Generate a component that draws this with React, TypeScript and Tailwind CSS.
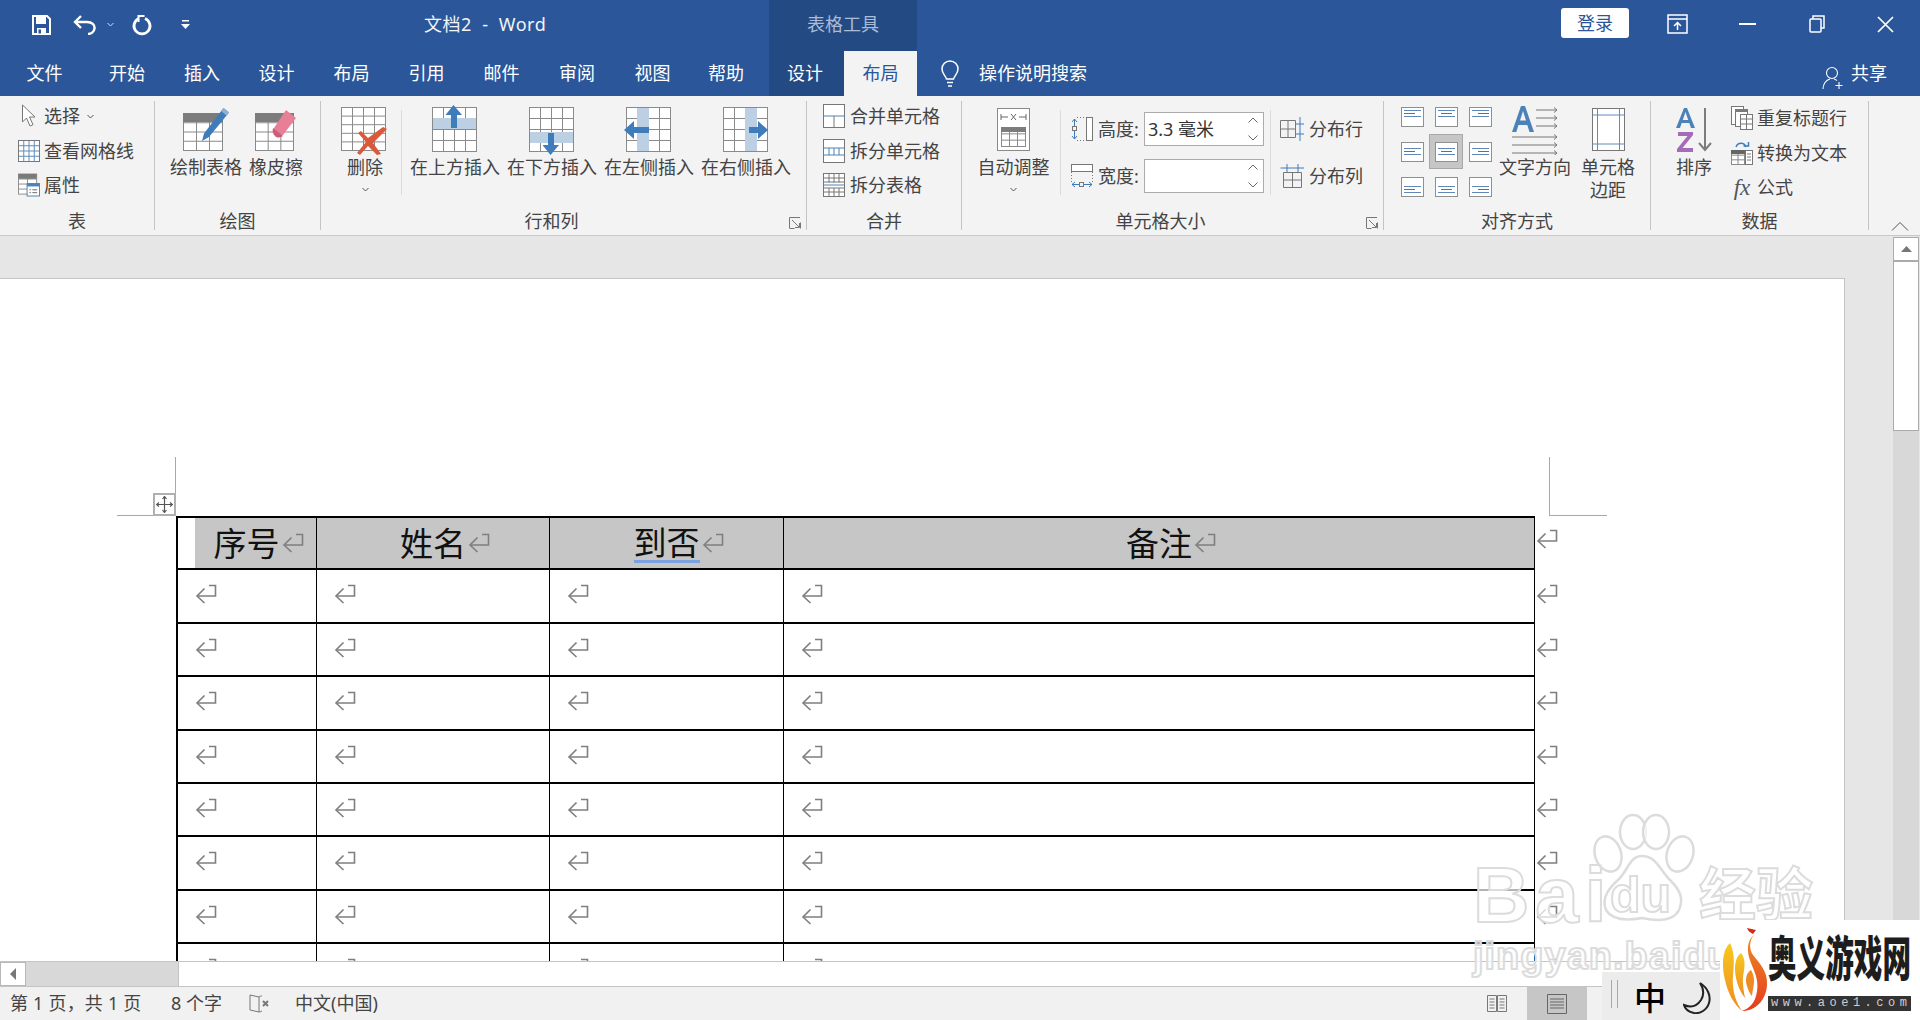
import type { ReactNode } from "react";

const BLUE = "#2b579a";
const ARROW = "#3f7cba";
const BAND = "#bccfe3";
const LINE = "#8a8a8a";

function Grid({ x, y, w, h, cols, rows, stroke = LINE }: { x: number; y: number; w: number; h: number; cols: number; rows: number; stroke?: string }) {
  const items = [];
  for (let i = 1; i < cols; i++) {
    const px = x + (w * i) / cols;
    items.push(<line key={`c${i}`} x1={px} y1={y} x2={px} y2={y + h} stroke={stroke} strokeWidth="1" />);
  }
  for (let i = 1; i < rows; i++) {
    const py = y + (h * i) / rows;
    items.push(<line key={`r${i}`} x1={x} y1={py} x2={x + w} y2={py} stroke={stroke} strokeWidth="1" />);
  }
  return (
    <g>
      <rect x={x} y={y} width={w} height={h} fill="#fff" stroke={stroke} strokeWidth="1" />
      {items}
    </g>
  );
}

function ReturnMark({ className = "" }: { className?: string }) {
  return (
    <svg width="22" height="20" viewBox="0 0 22 20" fill="none" stroke="#7f7f7f" strokeWidth="1.6" className={`shrink-0 ${className}`}>
      <path d="M14 1.5h6.5v10.5H2" />
      <path d="M9.5 4.5 2 12l7.500 7" />
    </svg>
  );
}

function Chevron({ className = "", color = "#555" }: { className?: string; color?: string }) {
  return (
    <svg width="7" height="5" viewBox="0 0 7 5" fill="none" stroke={color} strokeWidth="1" className={className}>
      <path d="M.5 1 3.500 4l3-3" />
    </svg>
  );
}

function Launcher() {
  return (
    <svg width="12" height="12" viewBox="0 0 12 12" fill="none" stroke="#777" strokeWidth="1">
      <path d="M.5 11V.5H11M.5 11.500h5M11.500 5.500v6M3 3l7 7M6 10.500h4.500V6" />
    </svg>
  );
}

function InsertIcon({ dir }: { dir: "up" | "down" | "left" | "right" }) {
  return (
    <svg width="50" height="50" viewBox="0 0 50 50">
      <Grid x={2.500} y={2.500} w={44} h={44} cols={4} rows={4} />
      {dir === "up" && <rect x="3" y="13" width="43" height="11" fill={BAND} />}
      {dir === "down" && <rect x="3" y="27" width="43" height="11" fill={BAND} />}
      {dir === "left" && <rect x="13" y="3" width="12" height="43" fill={BAND} />}
      {dir === "right" && <rect x="24" y="3" width="12" height="43" fill={BAND} />}
      {dir === "up" && <path d="M23.500 0 32 10h-5v13h-6V10h-5.500z" fill={ARROW} />}
      {dir === "down" && <path d="M23.500 50 32 40h-5V28h-6v12h-5.500z" fill={ARROW} />}
      {dir === "left" && <path d="M0 25l10-9v6h15v6H10v6z" fill={ARROW} />}
      {dir === "right" && <path d="M47 25l-10-9v6H28v6h9v6z" fill={ARROW} />}
    </svg>
  );
}

function LargeBtn({ label, second, icon, width, chevron, className = "" }: { label: string; second?: string; icon: ReactNode; width: number; chevron?: boolean; className?: string }) {
  return (
    <div className={`flex flex-col items-center pt-[9px] shrink-0 ${className}`} style={{ width }}>
      <div className="h-[50px] flex items-center justify-center">{icon}</div>
      <div className="leading-[24px] whitespace-nowrap">{label}</div>
      {second && <div className="leading-[22px] whitespace-nowrap">{second}</div>}
      {chevron && (
        <div className="h-[20px] flex items-center">
          <Chevron />
        </div>
      )}
    </div>
  );
}

function SmallRow({ icon, label, iconWidth = 22, gap = 4, after }: { icon: ReactNode; label: string; iconWidth?: number; gap?: number; after?: ReactNode }) {
  return (
    <div className="flex items-center whitespace-nowrap h-[34.5px]">
      <div className="flex items-center justify-center shrink-0" style={{ width: iconWidth, marginRight: gap }}>
        {icon}
      </div>
      {label}
      {after}
    </div>
  );
}

function Group({ width, label, launcher, children, bodyClass = "" }: { width: number; label?: string; launcher?: boolean; children: ReactNode; bodyClass?: string }) {
  return (
    <div className="flex flex-col shrink-0 h-full" style={{ width }}>
      <div className={`h-[112px] flex ${bodyClass}`}>{children}</div>
      <div className="h-[27px] mt-px flex items-center">
        <div className="flex-1 text-center leading-[27px]">{label}</div>
        {launcher && (
          <div className="w-[24px] flex justify-center pt-[3px] pl-[2px]">
            <Launcher />
          </div>
        )}
      </div>
    </div>
  );
}

function GroupSep() {
  return <div className="w-px h-[129px] mt-[5px] bg-[#c4c4c4] shrink-0" />;
}

function InnerSep({ className = "" }: { className?: string }) {
  return <div className={`w-px h-[85px] mt-[14px] bg-[#dcdcdc] shrink-0 ${className}`} />;
}

function AlignCell({ h, v, active }: { h: "l" | "c" | "r"; v: "t" | "m" | "b"; active?: boolean }) {
  const y0 = v === "t" ? 3.500 : v === "m" ? 6.500 : 9.500;
  const widths = [17, 11, 17];
  return (
    <div className={`w-[34px] h-[35px] flex items-center justify-center ${active ? "bg-[#c6c6c6] border border-[#a8a8a8]" : ""}`}>
      <svg width="23" height="20" viewBox="0 0 23 20">
        <rect x=".5" y=".5" width="22" height="19" fill="#fff" stroke="#8f8f8f" />
        {widths.map((w, i) => {
          const x = h === "l" ? 3 : h === "c" ? (23 - w) / 2 : 20 - w;
          const lineColor = i === 1 ? "#6d6d6d" : "#5f88b8";
          return <line key={i} x1={x} x2={x + w} y1={y0 + i * 3} y2={y0 + i * 3} stroke={lineColor} />;
        })}
      </svg>
    </div>
  );
}

function Spinner() {
  return (
    <div className="flex flex-col gap-[12px]">
      <svg width="10" height="6" viewBox="0 0 10 6" fill="none" stroke="#666">
        <path d="M.5 5.500 5 1l4.500 4.500" />
      </svg>
      <svg width="10" height="6" viewBox="0 0 10 6" fill="none" stroke="#666">
        <path d="M.5.5 5 5 9.500.5" />
      </svg>
    </div>
  );
}

function Ribbon() {
  return (
    <div className="h-[140px] bg-[#f3f3f3] border-b border-[#c8c8c8] flex text-[18px] leading-none text-[#444] shrink-0">
      <Group width={154} label="表" bodyClass="flex-col pl-[18px] pt-[3px]">
        <SmallRow
          label="选择"
          icon={
            <svg width="16" height="24" viewBox="0 0 16 24" fill="#fff" stroke="#777">
              <path d="M1.500 1v17l4-4 3.500 8 3-1.300-3.500-7.700h5.500z" />
            </svg>
          }
          after={<Chevron className="ml-[7px]" />}
        />
        <SmallRow
          label="查看网格线"
          icon={
            <svg width="22" height="24" viewBox="0 0 22 24">
              <Grid x={.5} y={1.500} w={21} h={21} cols={4} rows={4} stroke="#5e8cbc" />
              <rect x=".5" y="1.500" width="21" height="21" fill="none" stroke="#777" />
            </svg>
          }
        />
        <SmallRow
          label="属性"
          icon={
            <svg width="23" height="24" viewBox="0 0 23 24">
              <Grid x={.5} y={.5} w={19} h={21} cols={2} rows={4} stroke="#8c8c8c" />
              <rect x=".5" y=".5" width="19" height="5" fill="#7a7a7a" />
              <rect x="9.500" y="10.500" width="13" height="13" fill="#fff" stroke="#4d82b8" />
              <rect x="9.500" y="10.500" width="13" height="3" fill="#4d82b8" />
              <path d="M12 17h1.500M15 17h5M12 20h1.500M15 20h5" stroke="#666" />
            </svg>
          }
        />
      </Group>
      <GroupSep />
      <Group width={165} label="绘图" bodyClass="pl-[15px]">
        <LargeBtn
          width={72}
          label="绘制表格"
          icon={
            <svg width="48" height="46" viewBox="0 0 48 46">
              <Grid x={1.500} y={6.500} w={39} h={37} cols={3} rows={4} />
              <rect x="1" y="6" width="40" height="9" fill="#7c7c7c" />
              <path d="M41.500 1 47 5.500 27 30l-7 4 2-7.500z" fill="#3f7cba" />
              <path d="M41.500 1 47 5.500l-2.500 3-5.500-4.500z" fill="#8eb1d4" />
            </svg>
          }
        />
        <LargeBtn
          width={54}
          className="ml-[7px]"
          label="橡皮擦"
          icon={
            <svg width="44" height="46" viewBox="0 0 44 46">
              <Grid x={1.500} y={6.500} w={38} h={37} cols={3} rows={4} />
              <rect x="1" y="6" width="39" height="9" fill="#7c7c7c" />
              <path d="M32 3l10 8-13 17c-3 2-6 1-8-1-2-2-2-4-1-6z" fill="#e77f96" />
              <path d="M19 21l10 8c-3 2-6 2-8 0-2-2-3-5-2-8z" fill="#c96078" />
            </svg>
          }
        />
      </Group>
      <GroupSep />
      <Group width={485} label="行和列" launcher bodyClass="pl-[20px]">
        <LargeBtn
          width={48}
          label="删除"
          chevron
          icon={
            <svg width="50" height="50" viewBox="0 0 50 50">
              <Grid x={1.500} y={2.500} w={44} h={43} cols={4} rows={5} />
              <path d="M21 26l7 7 15-11 4 2-14 14 8 11-4 1-9-9-8 9-3-2 9-11-8-9z" fill="#d9593a" />
            </svg>
          }
        />
        <InnerSep className="ml-[12px]" />
        <div className="flex gap-[7px] ml-[8px]">
          <LargeBtn width={90} label="在上方插入" icon={<InsertIcon dir="up" />} />
          <LargeBtn width={90} label="在下方插入" icon={<InsertIcon dir="down" />} />
          <LargeBtn width={90} label="在左侧插入" icon={<InsertIcon dir="left" />} />
          <LargeBtn width={90} label="在右侧插入" icon={<InsertIcon dir="right" />} />
        </div>
      </Group>
      <GroupSep />
      <Group width={154} label="合并" bodyClass="flex-col pl-[16px] pt-[3px]">
        <SmallRow
          label="合并单元格"
          gap={5}
          icon={
            <svg width="22" height="24" viewBox="0 0 22 24" fill="#fff" stroke="#777">
              <rect x=".5" y=".5" width="21" height="23" />
              <path d="M.5 12h21" stroke="#4d82b8" />
              <path d="M11 12v11.500" />
            </svg>
          }
        />
        <SmallRow
          label="拆分单元格"
          gap={5}
          icon={
            <svg width="22" height="24" viewBox="0 0 22 24" fill="#fff" stroke="#777">
              <rect x=".5" y=".5" width="21" height="23" />
              <path d="M.5 9h21M.5 16h21M6 9v7M11 9v7M16 9v7" stroke="#4d82b8" />
            </svg>
          }
        />
        <SmallRow
          label="拆分表格"
          gap={5}
          icon={
            <svg width="22" height="24" viewBox="0 0 22 24" fill="#fff" stroke="#777">
              <rect x=".5" y=".5" width="21" height="23" />
              <path d="M.5 5h21M.5 9h21M.5 15h21M.5 19h21M6 .5v9M11 .5v9M16 .5v9M6 15v9M11 15v9M16 15v9" />
              <path d="M.5 12h21" stroke="#4d82b8" />
            </svg>
          }
        />
      </Group>
      <GroupSep />
      <Group width={421} label="单元格大小" launcher bodyClass="pl-[16px]">
        <LargeBtn
          width={71}
          label="自动调整"
          chevron
          icon={
            <svg width="34" height="44" viewBox="0 0 34 44">
              <rect x=".5" y=".5" width="32" height="42" fill="#fff" stroke="#8a8a8a" />
              <path d="M4 9h7M4 6v6M29 9h-7M29 6v6M14 6l5 6M19 6l-5 6" stroke="#666" fill="none" />
              <Grid x={4.500} y={19.500} w={24} h={19} cols={3} rows={3} />
              <rect x="4" y="19" width="25" height="5" fill="#7c7c7c" />
            </svg>
          }
        />
        <InnerSep className="ml-[11px]" />
        <div className="ml-[10px] pt-[16px] flex flex-col gap-[13px] shrink-0">
          <div className="flex items-center h-[34px] whitespace-nowrap">
            <svg width="22" height="24" viewBox="0 0 22 24" className="mr-[5px]" fill="none">
              <path d="M3.500 2v20M1 5l2.500-3 2.500 3M1 19l2.500 3 2.500-3" stroke={ARROW} />
              <rect x="1.500" y="9.500" width="4" height="4" stroke="#777" fill="#f3f3f3" />
              <rect x="15.500" y=".5" width="6" height="23" stroke="#777" fill="#fff" />
              <path d="M6 .5h9M6 23.500h9" stroke="#777" strokeDasharray="1 2" />
            </svg>
            <span className="w-[46px]">高度:</span>
            <div className="w-[120px] h-[34px] bg-white border border-[#ababab] flex items-center justify-between pl-[3px] pr-[5px] text-[18px] text-[#333]">
              <span>3.3 毫米</span>
              <Spinner />
            </div>
          </div>
          <div className="flex items-center h-[34px] whitespace-nowrap">
            <svg width="22" height="24" viewBox="0 0 22 24" className="mr-[5px]" fill="none">
              <rect x=".5" y=".5" width="21" height="7" stroke="#777" fill="#fff" />
              <path d="M.5 8v11M21.500 8v11" stroke="#777" strokeDasharray="1 2" />
              <path d="M1 20.500h20M4 18l-3 2.500L4 23M18 18l3 2.500L18 23" stroke={ARROW} />
              <rect x="8.500" y="18.500" width="4" height="4" stroke="#777" fill="#f3f3f3" />
            </svg>
            <span className="w-[46px]">宽度:</span>
            <div className="w-[120px] h-[34px] bg-white border border-[#ababab] flex items-center justify-end pr-[5px]">
              <Spinner />
            </div>
          </div>
        </div>
        <InnerSep className="ml-[6px]" />
        <div className="ml-[9px] pt-[16px] flex flex-col gap-[13px] shrink-0">
          <div className="flex items-center h-[34px] whitespace-nowrap">
            <svg width="24" height="26" viewBox="0 0 24 26" className="mr-[5px]" fill="none">
              <path d="M.5 4.500h15v17H.5zM.5 13h15M8 4.500v17" stroke="#777" />
              <path d="M20 1v24M16 8h8M16 18h8" stroke={ARROW} />
            </svg>
            分布行
          </div>
          <div className="flex items-center h-[34px] whitespace-nowrap">
            <svg width="24" height="26" viewBox="0 0 24 26" className="mr-[5px]" fill="none">
              <path d="M3.500 9.500h18v15h-18zM12.500 9.500v15M3.500 17h18" stroke="#777" />
              <path d="M.5 5h24M7 1v8M18 1v8" stroke={ARROW} />
            </svg>
            分布列
          </div>
        </div>
      </Group>
      <GroupSep />
      <Group width={266} label="对齐方式" bodyClass="pl-[11px]">
        <div className="pt-[3px] grid grid-cols-3 w-[102px] h-[108px] shrink-0">
          <AlignCell h="l" v="t" />
          <AlignCell h="c" v="t" />
          <AlignCell h="r" v="t" />
          <AlignCell h="l" v="m" />
          <AlignCell h="c" v="m" active />
          <AlignCell h="r" v="m" />
          <AlignCell h="l" v="b" />
          <AlignCell h="c" v="b" />
          <AlignCell h="r" v="b" />
        </div>
        <LargeBtn
          width={72}
          className="ml-[2px]"
          label="文字方向"
          icon={
            <svg width="48" height="50" viewBox="0 0 48 50" fill="none">
              <path d="M1 27 10 1h4l9 26h-4.500l-2.200-7H7.500l-2.200 7zM9 15.500h6L12 6z" fill="#4d82b8" />
              <g stroke="#777">
                <path d="M25 5h21M25 13h21M25 21h21M1 32h45M1 40h45M1 48h45" />
                <path d="M43 2.500 46 5l-3 2.500M43 10.500l3 2.500-3 2.500M43 18.500l3 2.500-3 2.500M43 29.500l3 2.500-3 2.500M43 37.500l3 2.500-3 2.500M43 45.500l3 2.500-3 2.500" />
              </g>
            </svg>
          }
        />
        <LargeBtn
          width={54}
          className="ml-[10px]"
          label="单元格"
          second="边距"
          icon={
            <svg width="33" height="44" viewBox="0 0 33 44" fill="none">
              <rect x=".5" y=".5" width="32" height="42" stroke="#777" fill="#fff" />
              <path d="M5.500 .5v42M27.500 .5v42M.5 7h32M.5 36h32" stroke="#5e8cbc" />
            </svg>
          }
        />
      </Group>
      <GroupSep />
      <Group width={217} label="数据" bodyClass="pl-[25px]">
        <LargeBtn
          width={36}
          label="排序"
          icon={
            <svg width="36" height="46" viewBox="0 0 36 46" fill="none">
              <path d="M0 21 8 1h3l8 20h-4l-1.700-5H5.700L4 21zM6.800 13h5.400L9.500 5z" fill="#4d82b8" />
              <path d="M2 25h15v3L6.500 41H17v4H1v-3l10.500-13H2z" fill="#a56bb8" />
              <path d="M29 1v42M23 36l6 7 6-7" stroke="#7c7c7c" strokeWidth="2" />
            </svg>
          }
        />
        <div className="ml-[19px] pt-[5px] flex flex-col shrink-0">
          <SmallRow
            label="重复标题行"
            icon={
              <svg width="22" height="24" viewBox="0 0 22 24" fill="#fff" stroke="#777">
                <rect x=".5" y=".5" width="12" height="18" />
                <rect x="4.500" y="3.500" width="12" height="17" />
                <rect x="9.500" y="8.500" width="12" height="15" />
                <path d="M9.500 13h12M9.500 18h12M15.500 8.500v15" />
                <rect x="4" y="3" width="13" height="3" fill="#7a7a7a" stroke="none" />
              </svg>
            }
          />
          <SmallRow
            label="转换为文本"
            icon={
              <svg width="22" height="24" viewBox="0 0 22 24" fill="none">
                <path d="M5 6c2-5 8-5 10 0" stroke={ARROW} strokeWidth="1.500" />
                <path d="M12.500 5h5V1" stroke={ARROW} strokeWidth="1.500" />
                <Grid x={.5} y={9.500} w={13} h={14} cols={2} rows={3} />
                <rect x="0" y="9" width="14" height="4" fill="#666" />
                <rect x="14.500" y="9.500" width="7" height="14" fill="#fff" stroke="#777" />
                <path d="M16 13h4M16 16h4M16 19h4" stroke="#777" />
              </svg>
            }
          />
          <SmallRow
            label="公式"
            icon={<span className="[font-family:'Liberation_Serif',serif] italic text-[23px] text-[#555]">fx</span>}
          />
        </div>
      </Group>
      <GroupSep />
      <div className="flex-1 flex items-end justify-center pb-[4px] pl-[10px]">
        <svg width="18" height="10" viewBox="0 0 18 10" fill="none" stroke="#555">
          <path d="M1 9.500 9 1.500l8 8" />
        </svg>
      </div>
    </div>
  );
}

function TitleBar() {
  return (
    <div className="h-[51px] flex text-white shrink-0" style={{ backgroundColor: BLUE }}>
      <div className="w-[424px] flex items-center pl-[32px] pb-[2px] shrink-0">
        <svg width="19" height="20" viewBox="0 0 19 20" fill="none">
          <path d="M1 1h14l3 3v15H1z" stroke="#fff" strokeWidth="2" fill="none" />
          <rect x="4" y="2" width="10" height="7" fill="#fff" />
          <rect x="5" y="13" width="9" height="6" fill="#fff" />
          <rect x="6.500" y="14.500" width="2.500" height="4" fill={BLUE} />
        </svg>
        <svg width="24" height="20" viewBox="0 0 24 20" fill="none" className="ml-[22px]" stroke="#fff" strokeWidth="2.400">
          <path d="M8 1 2 7l6 6" />
          <path d="M3 7h11c5 0 8 3 7.500 6.500-.4 3-3 5.500-6.500 5.500" />
        </svg>
        <Chevron className="ml-[10px]" color="#d5deec" />
        <svg width="22" height="22" viewBox="0 0 22 22" fill="none" className="ml-[17px]" stroke="#fff" strokeWidth="2.800">
          <path d="M8 4.500a8 8 0 1 0 6 0" />
          <path d="M7.500 1v7M7.500 2h6" strokeWidth="2" />
        </svg>
        <svg width="9" height="9" viewBox="0 0 9 9" className="ml-[28px]" fill="#fff">
          <rect x="1" y="0" width="7" height="1.500" />
          <path d="M0 4h9L4.500 9z" />
        </svg>
      </div>
      <div className="w-[345px] flex items-center pb-[2px] text-[18px] tracking-[.5px] text-[#f1f4f9] whitespace-nowrap shrink-0">文档2&nbsp;&nbsp;-&nbsp;&nbsp;Word</div>
      <div className="w-[148px] bg-[#244a83] flex items-center justify-center pb-[2px] text-[18px] text-[#a9bcd8] shrink-0">表格工具</div>
      <div className="w-[644px] shrink-0" />
      <div className="w-[68px] h-[30px] mt-[8px] bg-white rounded-[3px] text-[#2b579a] text-[18px] flex items-center justify-center shrink-0">登录</div>
      <div className="flex-1 flex items-center pl-[38px] pb-[3px]">
        <svg width="21" height="20" viewBox="0 0 21 20" fill="none" stroke="#fff" strokeWidth="1.500">
          <rect x="1" y="1" width="19" height="18" />
          <path d="M1 5h19" />
          <path d="M10.500 16V9M7 12l3.500-3.500L14 12" />
        </svg>
        <svg width="17" height="2" viewBox="0 0 17 2" className="ml-[51px]">
          <rect width="17" height="2" fill="#fff" />
        </svg>
        <svg width="16" height="18" viewBox="0 0 16 18" fill="none" stroke="#fff" strokeWidth="1.500" className="ml-[53px]">
          <rect x="1" y="4" width="11" height="13" rx="1" />
          <path d="M4 4V1h11v12h-3" />
        </svg>
        <svg width="17" height="17" viewBox="0 0 17 17" fill="none" stroke="#fff" strokeWidth="1.700" className="ml-[52px]">
          <path d="M1 1l15 15M16 1 1 16" />
        </svg>
      </div>
    </div>
  );
}

function Tab({ children, className = "" }: { children: ReactNode; className?: string }) {
  return <div className={`h-full flex items-center justify-center whitespace-nowrap shrink-0 ${className}`}>{children}</div>;
}

function TabBar() {
  return (
    <div className="h-[45px] flex text-white text-[18px] shrink-0" style={{ backgroundColor: BLUE }}>
      <Tab className="w-[89px]">文件</Tab>
      <Tab className="w-[76px]">开始</Tab>
      <Tab className="w-[74px]">插入</Tab>
      <Tab className="w-[75px]">设计</Tab>
      <Tab className="w-[75px]">布局</Tab>
      <Tab className="w-[75px]">引用</Tab>
      <Tab className="w-[75px]">邮件</Tab>
      <Tab className="w-[76px]">审阅</Tab>
      <Tab className="w-[75px]">视图</Tab>
      <Tab className="w-[72px]">帮助</Tab>
      <div className="w-[7px]" />
      <Tab className="w-[75px] bg-[#244a83] pr-[3px]">设计</Tab>
      <Tab className="w-[73px] bg-[#f3f3f3] text-[#2b579a]">布局</Tab>
      <div className="w-[24px]" />
      <svg width="18" height="27" viewBox="0 0 18 27" fill="none" stroke="#fff" strokeWidth="1.500" className="mt-[9px] shrink-0">
        <path d="M5.500 19c-.5-3-4.500-5-4.500-10a8 8 0 0 1 16 0c0 5-4 7-4.500 10z" />
        <path d="M6 22.500h6M7 26h4" />
      </svg>
      <div className="w-[20px]" />
      <div className="flex items-center whitespace-nowrap w-[843px] shrink-0">操作说明搜索</div>
      <svg width="22" height="24" viewBox="0 0 22 24" fill="none" stroke="#fff" strokeWidth="1.100" className="mt-[15px] shrink-0">
        <circle cx="10" cy="7" r="5.500" />
        <path d="M1 23c0-5 3-9 7-10M12 13c1 .3 2 .8 3 1.500M17 16v7M13.500 19.500h7" />
      </svg>
      <div className="flex items-center whitespace-nowrap pl-[7px]">共享</div>
    </div>
  );
}

const COLS = ["w-[139px]", "w-[233px]", "w-[234px]", "w-[751px]"];

function HeaderCell({ text, col, squiggle }: { text: string; col: number; squiggle?: boolean }) {
  return (
    <div className={`${COLS[col]} h-full border-r border-black bg-[#c6c6c6] flex items-center justify-center pt-px text-[33px] text-[#111] shrink-0`}>
      <span className={`leading-[34px] ${squiggle ? "border-b-[3px] border-[#7aa2de] -mb-[2px]" : ""}`}>{text}</span>
      <ReturnMark className="-mr-[24px] ml-[2px] -mt-[2px]" />
    </div>
  );
}

function BodyRow() {
  return (
    <div className="h-[53.4px] flex box-border">
      <div className="w-[1359px] flex border-b-[2.500px] border-l-2 border-black shrink-0">
        {COLS.map((c, i) => (
          <div key={i} className={`${c} border-r border-black pt-[14px] pl-[17px] shrink-0`}>
            <ReturnMark />
          </div>
        ))}
      </div>
      <ReturnMark className="ml-[1px] mt-[14px]" />
    </div>
  );
}

function DocTable() {
  return (
    <div className="ml-[176px] mt-[237px] w-[1390px]">
      <div className="h-[54.4px] flex">
        <div className="w-[1359px] flex border-y-[2.500px] border-l-2 border-black shrink-0">
          <div className="w-[139px] h-full border-r border-black pl-[17px] shrink-0">
            <div className="h-full bg-[#c6c6c6] flex items-center justify-center pt-px text-[33px] text-[#111] pr-[18px]">
              <span className="leading-[34px]">序号</span>
              <ReturnMark className="-mr-[24px] ml-[2px] -mt-[2px]" />
            </div>
          </div>
          <HeaderCell text="姓名" col={1} />
          <HeaderCell text="到否" col={2} squiggle />
          <HeaderCell text="备注" col={3} />
        </div>
        <ReturnMark className="ml-[1px] mt-[13px]" />
      </div>
      {Array.from({ length: 9 }).map((_, i) => (
        <BodyRow key={i} />
      ))}
    </div>
  );
}

function VScroll() {
  return (
    <div className="w-[26px] mr-px mt-px flex flex-col shrink-0">
      <div className="h-[25px] bg-white border border-[#ababab] border-b-2 flex items-center justify-center">
        <svg width="11" height="6" viewBox="0 0 11 6">
          <path d="M5.500 0 11 6H0z" fill="#777" />
        </svg>
      </div>
      <div className="h-[169px] bg-white border-x border-b border-[#ababab]" />
      <div className="flex-1 bg-[#d8d8d8]" />
    </div>
  );
}

function HScroll() {
  return (
    <div className="h-[26px] flex bg-white border-y border-[#c4c4c4] shrink-0">
      <div className="w-[26px] border border-[#b8b8b8] flex items-center justify-center shrink-0">
        <svg width="6" height="12" viewBox="0 0 6 12">
          <path d="M0 6l6-6v12z" fill="#777" />
        </svg>
      </div>
      <div className="w-[153px] bg-[#d8d8d8] border-r border-[#c4c4c4] shrink-0" />
    </div>
  );
}

function StatusBar() {
  return (
    <div className="flex-1 bg-[#f1f1f1] flex items-center text-[18px] text-[#444] whitespace-nowrap">
      <div className="ml-[10px] w-[161px] tracking-[.2px] shrink-0">第 1 页，共 1 页</div>
      <div className="w-[78px] shrink-0">8 个字</div>
      <svg width="21" height="20" viewBox="0 0 21 20" fill="none" stroke="#777" className="shrink-0">
        <path d="M10 3 1 1v15l9 2zM10 3c1-1 2-1 3-1M10 18c1 0 2-.5 3-1" />
        <path d="M14 7l5 5M19 7l-5 5" strokeWidth="2" />
      </svg>
      <div className="ml-[25px] w-[90px] shrink-0">中文(中国)</div>
      <div className="w-[1102px] shrink-0" />
      <svg width="20" height="20" viewBox="0 0 20 20" fill="none" stroke="#777" className="shrink-0">
        <path d="M.5 1.500h9v16h-9zM10.500 1.500h9v16h-9zM2.500 5h5M2.500 8h5M2.500 11h5M2.500 14h5M12.500 5h5M12.500 8h5M12.500 11h5M12.500 14h5" />
      </svg>
      <div className="w-[60px] h-[33px] ml-[20px] bg-[#c6c6c6] flex items-center justify-center shrink-0">
        <svg width="20" height="20" viewBox="0 0 20 20" fill="none" stroke="#666">
          <path d="M.5.5h19v19H.5zM3 5h14M3 8h14M3 11h14M3 14h14" />
        </svg>
      </div>
    </div>
  );
}

function Watermark() {
  const stroke = "text-white/70 [-webkit-text-stroke:2px_#dcdcdc] [font-family:'Liberation_Sans',sans-serif] font-bold";
  return (
    <div className="absolute inset-0 pointer-events-none">
      <div className={`absolute left-[1473px] top-[850px] text-[78px] leading-[90px] tracking-[6px] ${stroke}`}>Bai</div>
      <svg className="absolute left-[1590px] top-[812px]" width="106" height="114" viewBox="0 0 106 114" fill="rgba(255,255,255,.6)" stroke="#dcdcdc" strokeWidth="2.500">
        <ellipse cx="18" cy="42" rx="13" ry="18" transform="rotate(-18 18 42)" />
        <ellipse cx="43" cy="20" rx="13" ry="17" />
        <ellipse cx="66" cy="20" rx="13" ry="17" />
        <ellipse cx="90" cy="42" rx="13" ry="18" transform="rotate(18 90 42)" />
        <path d="M52 44c14 0 18 14 28 24 10 10 14 18 9 30-5 10-18 12-37 8-16 3-30 2-36-8-5-12 3-22 13-31 9-9 11-23 23-23z" />
      </svg>
      <div className={`absolute left-[1610px] top-[866px] text-[50px] leading-[58px] ${stroke}`}>du</div>
      <div className="absolute left-[1699px] top-[860px] text-[57px] leading-[66px] text-white/70 [-webkit-text-stroke:2px_#dcdcdc] font-bold whitespace-nowrap">经验</div>
      <div className={`absolute left-[1473px] top-[938px] text-[38px] leading-[36px] tracking-[1px] whitespace-nowrap ${stroke}`}>jingyan.baidu</div>
    </div>
  );
}

function ImeBar() {
  return (
    <div className="absolute left-[1602px] top-[972px] w-[118px] h-[48px] bg-[#ececec] flex items-center pt-[3px]">
      <div className="ml-[9px] w-[7px] h-[28px] border-x border-[#a8a8a8] -mt-[8px]" />
      <div className="ml-[16px] text-[32px] leading-none text-black font-medium">中</div>
      <svg width="30" height="32" viewBox="0 0 30 32" fill="none" stroke="#222" strokeWidth="2" className="ml-[17px]">
        <path d="M17 1c8 5 11 13 9 20-2 7-9 11-15 10C6 30 2 27 1 23c7 3 13 1 17-5 3-5 3-11-1-17z" />
      </svg>
    </div>
  );
}

function Logo() {
  return (
    <div className="absolute left-[1720px] top-[920px] w-[200px] h-[100px] bg-white flex">
      <svg width="46" height="84" viewBox="0 0 46 84" className="ml-[2px] mt-[8px] shrink-0">
        <defs>
          <linearGradient id="flameA" x1="0" y1="0" x2="0" y2="1">
            <stop offset="0" stopColor="#f6c91f" />
            <stop offset="1" stopColor="#f08a22" />
          </linearGradient>
          <linearGradient id="flameB" x1="0" y1="0" x2="0" y2="1">
            <stop offset="0" stopColor="#f08a22" />
            <stop offset="1" stopColor="#e43d1f" />
          </linearGradient>
        </defs>
        <path d="M25 0l9 2-3 4c-3-2-5-3-6-6z" fill="#d8281c" />
        <path d="M32 7c-7 5-8 16-3 28 4 10 9 19 5 33-2 8-8 13-14 15 13 0 24-10 25-26 1-14-8-22-14-30-4-6-4-14 1-20z" fill="url(#flameB)" />
        <path d="M8 15C1 21-1 36 3 52c3 14 9 24 17 31-7-10-10-22-9-35 1-13 2-23-3-33z" fill="url(#flameA)" />
        <path d="M19 25c-6 4-7 14-5 25 2 9 5 15 9 20-2-11-3-19-1-27 1-7 1-13-3-18z" fill="url(#flameA)" />
        <path d="M29 42c-5 3-6 10-4 16 1 4 3 8 5 10 1-7 2-11 2-15 0-4-1-8-3-11z" fill="#f08a22" />
      </svg>
      <div className="w-[143px] shrink-0">
        <div className="h-[76px] flex items-center justify-center">
          <span className="text-[28.600px] font-black text-[#1d1d1d] leading-none scale-y-[1.65] whitespace-nowrap">奥义游戏网</span>
        </div>
        <div className="h-[15px] bg-[#333] text-[#cfcfcf] text-[12px] leading-[15px] tracking-[4.500px] pl-[3px] [font-family:'Liberation_Mono',monospace] whitespace-nowrap overflow-hidden">www.aoe1.com</div>
      </div>
    </div>
  );
}

export default function App() {
  return (
    <div className="relative w-[1920px] h-[1020px] overflow-hidden flex flex-col bg-[#e6e6e6] [font-family:'Noto_Sans','Noto_Sans_CJK_SC',sans-serif]">
      <TitleBar />
      <TabBar />
      <Ribbon />
      <div className="h-[725px] flex overflow-hidden shrink-0">
        <div className="flex-1 relative overflow-hidden">
          <div className="w-[1845px] h-[700px] mt-[42px] bg-white border-t border-r border-[#c4c4c4]">
            <DocTable />
            {/* crop marks round the top of the table */}
            <div className="absolute left-[175px] top-[221px] w-px h-[58px] bg-[#a8a8a8]" />
            <div className="absolute left-[117px] top-[279px] w-[36px] h-px bg-[#a8a8a8]" />
            <div className="absolute left-[1549px] top-[221px] w-px h-[58px] bg-[#a8a8a8]" />
            <div className="absolute left-[1549px] top-[279px] w-[58px] h-px bg-[#a8a8a8]" />
            <div className="absolute left-[153px] top-[257px] w-[23px] h-[23px] bg-white border-2 border-[#b0b0b0] flex items-center justify-center">
              <svg width="17" height="17" viewBox="0 0 17 17" fill="none" stroke="#555" strokeWidth="1.200">
                <path d="M8.500 1v15M1 8.500h15M6.500 3l2-2.500 2 2.500M6.500 14l2 2.500 2-2.500M3 6.500.5 8.500l2.500 2M14 6.500l2.500 2-2.500 2" />
              </svg>
            </div>
          </div>
        </div>
        <VScroll />
      </div>
      <HScroll />
      <StatusBar />
      <Watermark />
      <ImeBar />
      <Logo />
    </div>
  );
}
